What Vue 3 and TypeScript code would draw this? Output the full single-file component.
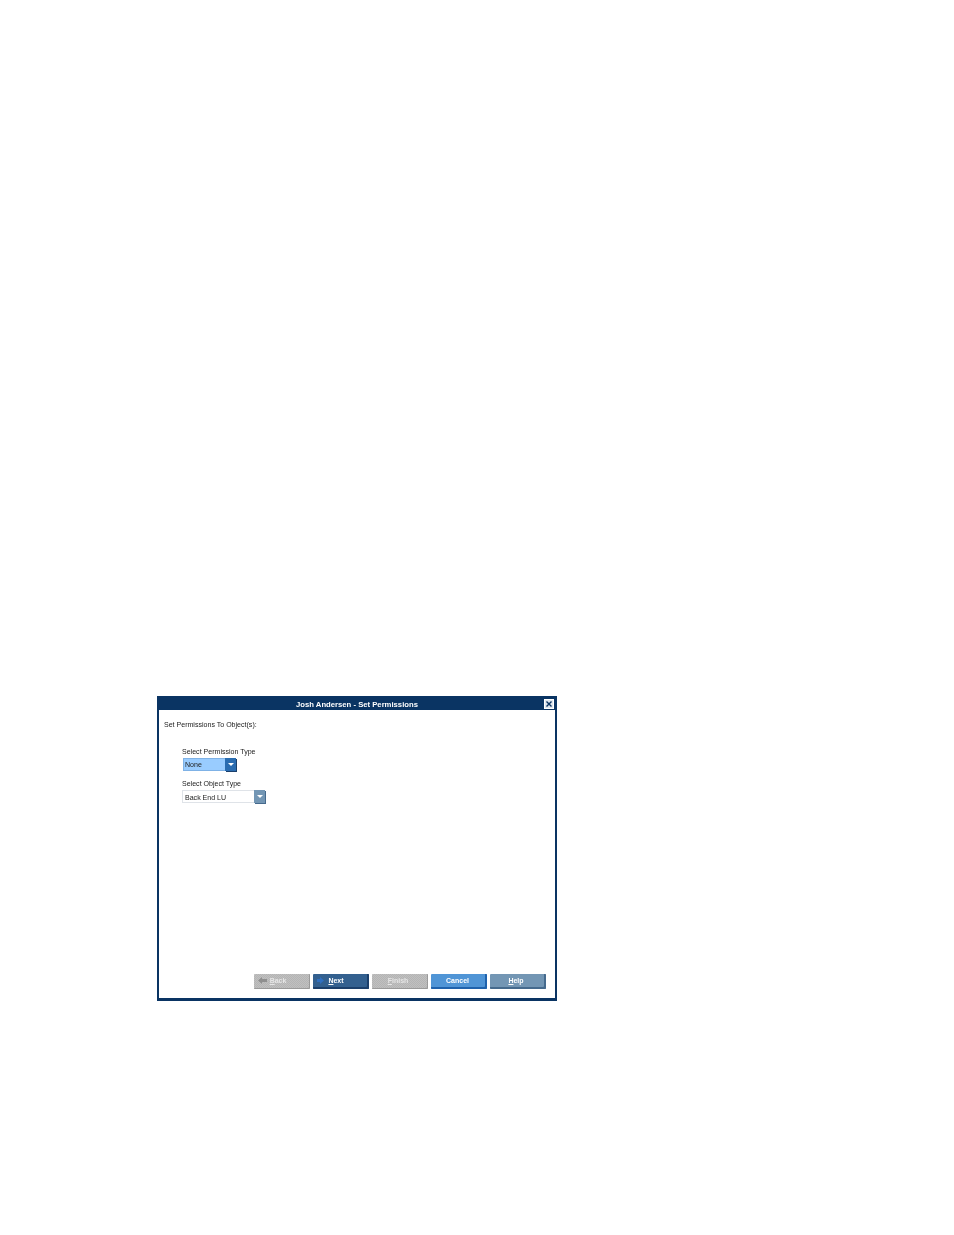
<script setup lang="ts">
interface WizardButton {
  label: string;
  key: string;
  rest: string;
  kind: string;
}

const buttons: WizardButton[] = [
  { label: 'Back', key: 'B', rest: 'ack', kind: 'off back' },
  { label: 'Next', key: 'N', rest: 'ext', kind: 'next' },
  { label: 'Finish', key: 'F', rest: 'inish', kind: 'off finish' },
  { label: 'Cancel', key: '', rest: 'Cancel', kind: 'cancel' },
  { label: 'Help', key: 'H', rest: 'elp', kind: 'help' },
];
</script>

<template>
  <div class="page">
    <div class="dialog">
      <div class="titlebar">
        <span class="title">Josh Andersen - Set Permissions</span>
        <span class="close">
          <svg width="8" height="8" viewBox="0 0 8 8">
            <path d="M1.5 1.5 6.5 6.5M6.5 1.5 1.5 6.5" stroke="#0a3463" stroke-width="1.4" fill="none" />
          </svg>
        </span>
      </div>
      <div class="body">
        <div class="heading">Set Permissions To Object(s):</div>
        <div class="fields">
          <div class="label">Select Permission Type</div>
          <div class="select focused">
            <span class="value">None</span>
            <span class="arrow"><i></i></span>
          </div>
          <div class="label second">Select Object Type</div>
          <div class="select plain">
            <span class="value">Back End LU</span>
            <span class="arrow"><i></i></span>
          </div>
        </div>
        <div class="actions">
          <button v-for="b in buttons" :key="b.label" class="btn" :class="b.kind">
            <svg v-if="b.label === 'Back'" class="ico" width="9" height="7" viewBox="0 0 9 7">
              <path d="M0 3.5 4 0V2H9V5H4V7Z" fill="#8f8f8f" />
            </svg>
            <svg v-if="b.label === 'Next'" class="ico" width="7" height="7" viewBox="0 0 7 7">
              <path d="M3 0 7 3.5 3 7V5H0V2H3Z" fill="#2f6fc0" />
            </svg>
            <span><u v-if="b.key">{{ b.key }}</u>{{ b.rest }}</span>
          </button>
        </div>
      </div>
    </div>
  </div>
</template>

<style>
html, body { background: #fff; }
</style>

<style scoped>
.page {
  width: 954px; height: 1235px; box-sizing: border-box;
  padding: 696px 0 0 157px; background: #fff;
  font-family: "Liberation Sans", Arial, sans-serif;
}
.dialog {
  width: 400px; height: 305px; box-sizing: border-box;
  border: solid #0a3463; border-width: 0 2px 3px 2px;
  display: flex; flex-direction: column; background: #fff;
  will-change: transform;
}
.titlebar {
  height: 14px; flex: none; background: #0a3463;
  display: flex; align-items: center; justify-content: center; position: relative;
}
.title { color: #fff; font-size: 7.7px; font-weight: bold; padding-top: 2px; }
.close {
  position: absolute; right: 1px; top: 3px; width: 8px; height: 8px;
  border: 1px solid #fff; background: #dfe6ee;
  display: flex;
}
.body { flex: 1; display: flex; flex-direction: column; color: #222; font-size: 7.05px; }
.heading { padding: 11px 0 0 5px; line-height: 8px; }
.fields { padding: 19px 0 0 23px; flex: 1; }
.label { line-height: 8px; padding-bottom: 2px; }
.label.second { padding-top: 9px; }
.select { display: flex; height: 13px; }
.focused { width: 53px; margin-left: 1px; }
.plain { width: 83px; }
.value { flex: 1; line-height: 14px; padding-left: 2px; box-sizing: border-box; border: 1px solid #dfe3e8; border-width: 1px 0 1px 1px; }
.focused .value { background: #99ccff; border-color: #7fb2e6; line-height: 12px; padding-left: 1px; }
.plain .value { background: #fff; }
.arrow { width: 11px; display: flex; align-items: center; justify-content: center; }
.focused .arrow { background: #2a6cb0; box-shadow: 1px 1px 0 #1b3f6b; }
.plain .arrow { background: #7396b4; box-shadow: 1px 1px 0 #456a8d; }
.arrow i {
  width: 0; height: 0; border: solid transparent; border-width: 3px 3px 0 3px; border-top-color: #fff;
}
.actions { display: flex; gap: 3px; padding: 0 9px 9px 0; justify-content: flex-end; }
.btn {
  width: 56px; height: 15px; padding: 0 0 2px; border: none; border-radius: 1px;
  display: flex; align-items: center; justify-content: center; gap: 3px;
  font: bold 7px "Liberation Sans", Arial, sans-serif; color: #fff;
  position: relative;
}
.btn u { text-decoration: underline; }
.ico { position: absolute; left: 4px; top: 3px; }
.off {
  color: #e6e6e6;
  background: repeating-conic-gradient(#c0c0c0 0 25%, #b4b4b4 0 50%) 0 0 / 2px 2px;
  box-shadow: inset -1px -1px 0 #9a9a9a;
}
.back { padding-right: 8px; }
.finish { padding-right: 4px; }
.next { background: #33608f; box-shadow: inset -2px -2px 0 #1b3f6b; padding-right: 10px; }
.cancel { background: #5095d6; box-shadow: inset -2px -2px 0 #1f62ac; padding-right: 3px; }
.help { background: #7396b4; box-shadow: inset -2px -2px 0 #456a8d; padding-right: 4px; }
</style>
